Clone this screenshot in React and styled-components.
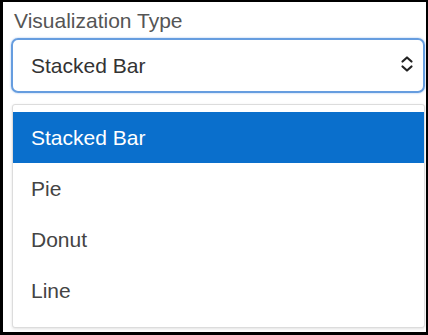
import React from 'react';
import styled, { createGlobalStyle } from 'styled-components';

const GlobalStyle = createGlobalStyle`
  html, body {
    margin: 0;
    padding: 0;
    background: #000;
  }
  body {
    font-family: "Liberation Sans", Arial, sans-serif;
  }
`;

const Frame = styled.div`
  margin: 2px 2px 0 3px;
  height: 330px;
  background: #fff;
  padding: 7px 1px 0 8px;
  box-sizing: border-box;
  position: relative;
  overflow: hidden;
`;

const Label = styled.div`
  font-size: 21px;
  line-height: 24px;
  color: #555;
  margin-left: 3px;
`;

const SelectBox = styled.div`
  margin-top: 5px;
  height: 55px;
  box-sizing: border-box;
  border: 2px solid #669ddf;
  border-radius: 7px;
  box-shadow: 0 0 2px rgba(80, 140, 220, 0.6);
  display: flex;
  align-items: center;
  justify-content: space-between;
  padding: 0 9px 0 18px;
  font-size: 21px;
  color: #333;
`;

const Chevrons = styled.svg`
  width: 14px;
  height: 18px;
  margin-top: -3px;
`;

const Menu = styled.ul`
  list-style: none;
  margin: 11px 0 0 1px;
  padding: 7px 0 11px;
  border: 1px solid #dcdcdc;
  border-radius: 3px;
  box-shadow: 0 1px 3px rgba(0, 0, 0, 0.12);
  background: #fff;
`;

const Option = styled.li`
  height: 51px;
  display: flex;
  align-items: center;
  padding-left: 18px;
  font-size: 21px;
  color: ${(p) => (p.$active ? '#fff' : '#444')};
  background: ${(p) => (p.$active ? '#0a6fcc' : 'transparent')};
`;

const options = ['Stacked Bar', 'Pie', 'Donut', 'Line'];

const App = () => (
  <>
    <GlobalStyle />
    <Frame>
      <Label>Visualization Type</Label>
      <SelectBox>
        <span>Stacked Bar</span>
        <Chevrons viewBox="0 0 14 18" fill="none" stroke="#222" strokeWidth="2.2" strokeLinecap="round" strokeLinejoin="round">
          <path d="M2.5 6.5 L7 2.5 L11.5 6.5" />
          <path d="M2.5 11.5 L7 15.5 L11.5 11.5" />
        </Chevrons>
      </SelectBox>
      <Menu>
        {options.map((o, i) => (
          <Option key={o} $active={i === 0}>
            {o}
          </Option>
        ))}
      </Menu>
    </Frame>
  </>
);

export default App;
